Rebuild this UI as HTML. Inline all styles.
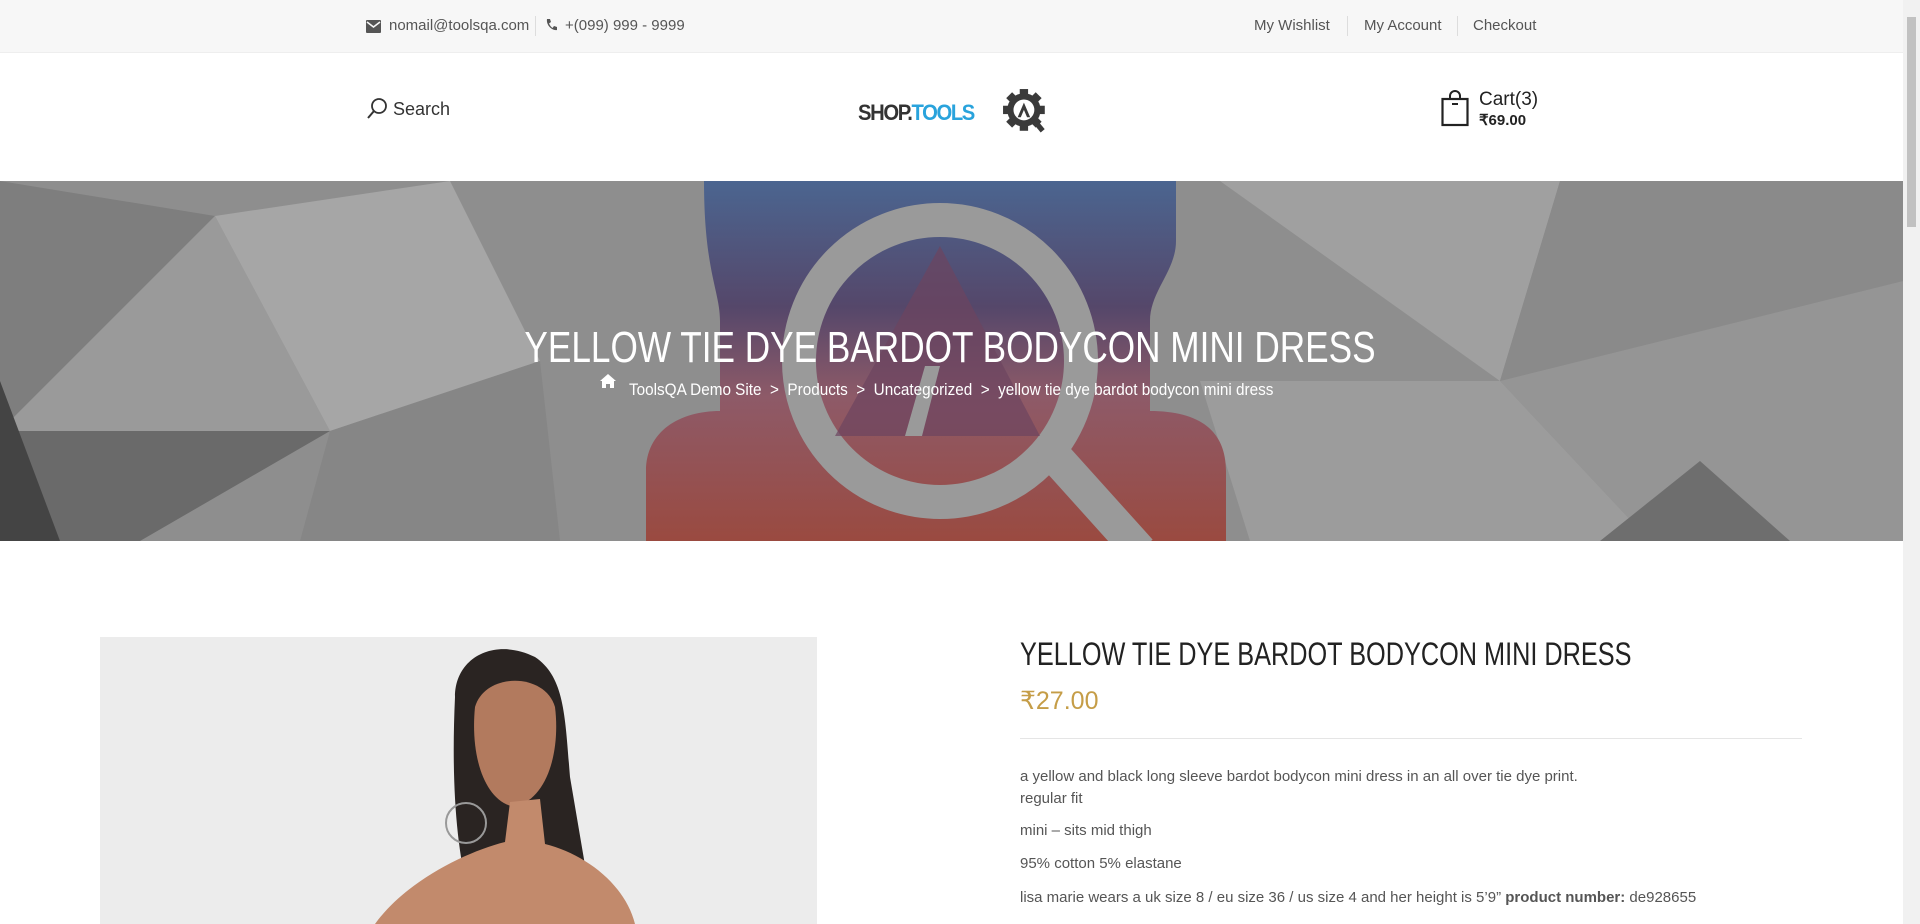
<!DOCTYPE html>
<html><head><meta charset="utf-8"><style>
*{margin:0;padding:0;box-sizing:border-box}
html,body{width:1920px;height:924px;overflow:hidden;background:#fff;font-family:"Liberation Sans",sans-serif;color:#555}
.page{position:absolute;left:0;top:0;width:1903px;height:924px}
.sb{position:absolute;right:0;top:0;width:17px;height:924px;background:#f1f1f1}
.sb div{position:absolute;left:4px;top:17px;width:9px;height:210px;background:#c1c1c1}
.top{position:absolute;left:0;top:0;width:1903px;height:53px;background:#f7f7f7;border-bottom:1px solid #eee;font-size:15px;color:#555}
.abs{position:absolute;white-space:nowrap}
.sep{position:absolute;width:1px;height:20px;background:#ddd;top:16px}
</style></head><body><div class="page">
<div class="top">
 <svg class="abs" style="left:366px;top:20px" width="15" height="13" viewBox="0 0 15 13"><rect width="15" height="13" rx="1" fill="#555"/><path d="M1 2l6.5 5L14 2" stroke="#f7f7f7" stroke-width="1.6" fill="none"/></svg>
 <div class="abs" style="left:389px;top:17px">nomail@toolsqa.com</div>
 <div class="sep" style="left:535px"></div>
 <svg class="abs" style="left:545px;top:18px" width="12" height="14" viewBox="0 0 12 14"><path d="M2 1l3 0 1 3-2 1.5c1 2 2 3.5 3.5 4.5L9 8l3 1v3c-5 1-11-5-10-11z" fill="#555"/></svg>
 <div class="abs" style="left:565px;top:17px">+(099) 999 - 9999</div>
 <div class="abs" style="left:1254px;top:17px">My Wishlist</div>
 <div class="sep" style="left:1347px"></div>
 <div class="abs" style="left:1364px;top:17px">My Account</div>
 <div class="sep" style="left:1457px"></div>
 <div class="abs" style="left:1473px;top:17px">Checkout</div>
</div>
<svg class="abs" style="left:366px;top:97px" width="22" height="24" viewBox="0 0 22 24"><circle cx="13" cy="9" r="7" stroke="#333" stroke-width="1.8" fill="none"/><path d="M8 14L2 21" stroke="#333" stroke-width="2"/></svg>
<div class="abs" style="left:393px;top:99px;font-size:18px;color:#333">Search</div>
<div class="abs" style="left:858px;top:100px;font-size:22px;font-weight:bold;letter-spacing:-1.5px;transform:scaleX(0.92);transform-origin:left"><span style="color:#333">SHOP.</span><span style="color:#29a3dc">TOOLS</span></div>
<svg class="abs" style="left:1002px;top:88px" width="48" height="48" viewBox="0 0 46 46"><g fill="#3a3a3a"><circle cx="21" cy="21" r="16"/><rect x="17" y="1" width="8" height="40"/><rect x="1" y="17" width="40" height="8"/><rect x="17" y="1" width="8" height="40" transform="rotate(45 21 21)"/><rect x="17" y="1" width="8" height="40" transform="rotate(-45 21 21)"/></g><circle cx="21" cy="21" r="10" fill="#fff"/><path d="M15 28l6-14 6 14h-3l-3-7-3 7z" fill="#3a3a3a"/><path d="M29 29l10 12" stroke="#3a3a3a" stroke-width="5"/></svg>
<svg class="abs" style="left:1441px;top:90px" width="28" height="37" viewBox="0 0 28 37"><rect x="1.5" y="9" width="25" height="26" fill="none" stroke="#222" stroke-width="2.2"/><path d="M9 9V6a5 5 0 0 1 10 0v3" fill="none" stroke="#222" stroke-width="2"/><path d="M11 14h6" stroke="#222" stroke-width="2"/></svg>
<div class="abs" style="left:1479px;top:89px;font-size:19px;color:#222">Cart(3)</div>
<div class="abs" style="left:1479px;top:111px;font-size:15px;font-weight:bold;color:#222">₹69.00</div>

<svg class="abs" style="left:0;top:181px" width="1903" height="360" viewBox="0 0 1903 360">
<defs><linearGradient id="gc" x1="0" y1="0" x2="0" y2="1"><stop offset="0" stop-color="#4b6590"/><stop offset="0.35" stop-color="#55476a"/><stop offset="0.6" stop-color="#8e5a68"/><stop offset="1" stop-color="#9a4a40"/></linearGradient></defs>
<rect width="1903" height="360" fill="#8e8e8e"/>
<polygon points="0,0 215,35 0,250" fill="#7e7e7e"/>
<polygon points="215,35 330,250 0,250" fill="#9a9a9a"/>
<polygon points="0,250 330,250 140,360 0,360" fill="#6a6a6a"/>
<polygon points="0,200 60,360 0,360" fill="#444"/>
<polygon points="215,35 450,0 540,180 330,250" fill="#a6a6a6"/>
<polygon points="330,250 540,180 560,360 300,360" fill="#868686"/>
<polygon points="1220,0 1560,0 1500,200" fill="#a0a0a0"/>
<polygon points="1500,200 1903,100 1903,360 1650,360" fill="#959595"/>
<polygon points="1560,0 1903,0 1903,100 1500,200" fill="#8a8a8a"/>
<polygon points="1200,200 1500,200 1650,360 1250,360" fill="#9c9c9c"/>
<polygon points="1700,280 1790,360 1600,360" fill="#6e6e6e"/>
<g fill="url(#gc)">
<path d="M704 0H1176V60C1176 90 1150 110 1150 140V230C1200 230 1226 250 1226 290V360H646V290C646 250 680 230 720 230V140C720 110 704 90 704 0z"/>
</g>
<circle cx="940" cy="180" r="141" fill="none" stroke="#9a9a9a" stroke-width="34"/>
<path d="M1050 270L1140 370" stroke="#9a9a9a" stroke-width="34"/>
<path d="M940 65L835 255H1040z" fill="#6c4560" opacity="0.7"/>
<path d="M905 255L925 185H940L922 255z" fill="#9a9a9a"/>
<text transform="translate(950,181) scale(0.8,1)" text-anchor="middle" style="font-size:44px;fill:#fff">YELLOW TIE DYE BARDOT BODYCON MINI DRESS</text>
<text transform="translate(629,214) scale(0.9,1)" style="font-size:17px;fill:#fff" xml:space="preserve">ToolsQA Demo Site  &gt;  Products  &gt;  Uncategorized  &gt;  yellow tie dye bardot bodycon mini dress</text>
<path d="M600 200l8-7 8 7h-2v7h-4v-4h-4v4h-4v-7z" fill="#fff"/>
</svg>

<div class="abs" style="left:100px;top:637px;width:717px;height:287px;background:#ececec;overflow:hidden">
 <svg width="717" height="287" viewBox="0 0 717 287"><path d="M355 60c0-40 40-60 80-40 30 20 30 60 35 120l25 147H380c-20-40-30-120-25-227z" fill="#2a2422"/><path d="M375 70c10-35 70-35 80 0 5 40-5 90-40 100-30-5-45-50-40-100z" fill="#b27a5e"/><path d="M410 165l-5 40c-40 10-100 40-130 82h260c-10-40-50-70-90-80l-5-45z" fill="#c28a6c"/><circle cx="366" cy="186" r="20" fill="none" stroke="#999" stroke-width="2"/></svg>
</div>
<div class="abs" style="left:1020px;top:636px;font-size:32px;color:#222;transform:scaleX(0.79);transform-origin:left">YELLOW TIE DYE BARDOT BODYCON MINI DRESS</div>
<div class="abs" style="left:1020px;top:686px;font-size:25px;color:#c59d47">₹27.00</div>
<div class="abs" style="left:1020px;top:738px;width:782px;height:1px;background:#e5e5e5"></div>
<div class="abs" style="left:1020px;top:766px;font-size:15px;line-height:22px;color:#555">a yellow and black long sleeve bardot bodycon mini dress in an all over tie dye print.<br>regular fit</div>
<div class="abs" style="left:1020px;top:822px;font-size:15px;color:#555">mini – sits mid thigh</div>
<div class="abs" style="left:1020px;top:855px;font-size:15px;color:#555">95% cotton 5% elastane</div>
<div class="abs" style="left:1020px;top:889px;font-size:15px;color:#555">lisa marie wears a uk size 8 / eu size 36 / us size 4 and her height is 5’9” <b>product number:</b> de928655</div>
</div>
<div class="sb"><div></div></div>
</body></html>
